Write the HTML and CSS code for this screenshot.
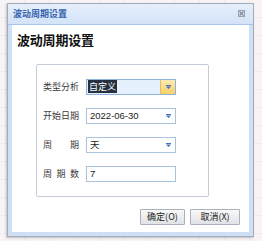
FILE: index.html
```html
<!DOCTYPE html>
<html>
<head>
<meta charset="utf-8">
<link rel="stylesheet" href="styles.css">
</head>
<body>
<div class="desk">
  <div class="dialog">
    <div class="titlebar">
      <span class="title">波动周期设置</span>
      <svg class="close" width="7" height="7" viewBox="0 0 7 7"><rect x="0.5" y="0.5" width="6" height="6" fill="none" stroke="#98a3b0" stroke-width="1"/><path d="M1.5 1.5 L5.5 5.5 M5.5 1.5 L1.5 5.5" stroke="#7d8896" stroke-width="1.2"/></svg>
    </div>
    <div class="frame">
      <div class="panel">
        <div class="heading">波动周期设置</div>
        <div class="fieldset">
          <div class="row">
            <div class="label"><span>类</span><span>型</span><span>分</span><span>析</span></div>
            <div class="combo active">
              <span class="value"><span class="sel">自定义</span></span>
              <span class="trigger hot"><svg width="5" height="4" viewBox="0 0 5 4"><rect x="0" y="0" width="5" height="1" fill="#3f6fb4"/><path d="M0 1.5 L5 1.5 L2.5 4 Z" fill="#3f6fb4"/></svg></span>
            </div>
          </div>
          <div class="row">
            <div class="label"><span>开</span><span>始</span><span>日</span><span>期</span></div>
            <div class="combo">
              <span class="value">2022-06-30</span>
              <span class="trigger"><svg width="5" height="4" viewBox="0 0 5 4"><rect x="0" y="0" width="5" height="1" fill="#3f6fb4"/><path d="M0 1.5 L5 1.5 L2.5 4 Z" fill="#3f6fb4"/></svg></span>
            </div>
          </div>
          <div class="row">
            <div class="label"><span>周</span><span>期</span></div>
            <div class="combo">
              <span class="value">天</span>
              <span class="trigger"><svg width="5" height="4" viewBox="0 0 5 4"><rect x="0" y="0" width="5" height="1" fill="#3f6fb4"/><path d="M0 1.5 L5 1.5 L2.5 4 Z" fill="#3f6fb4"/></svg></span>
            </div>
          </div>
          <div class="row">
            <div class="label"><span>周</span><span>期</span><span>数</span></div>
            <div class="combo">
              <span class="value">7</span>
            </div>
          </div>
        </div>
        <div class="buttons">
          <button class="btn ok">确定(O)</button>
          <button class="btn cancel">取消(X)</button>
        </div>
      </div>
    </div>
  </div>
</div>
</body>
</html>
```

FILE: styles.css
```css
html, body {
  margin: 0;
  padding: 0;
}
body {
  width: 262px;
  height: 241px;
  overflow: hidden;
  background-color: #f8f4f6;
  background-image:
    repeating-linear-gradient(to right, transparent 0, transparent 24px, #f0eaee 24px, #f0eaee 25px),
    repeating-linear-gradient(to bottom, transparent 0, transparent 17px, #f0eaee 17px, #f0eaee 18px);
  font-family: "Noto Sans CJK SC", "Liberation Sans", sans-serif;
}
.desk {
  padding: 3px 0 0 7px;
}
.dialog {
  width: 245px;
  height: 232px;
  border: 1px solid #a3acb9;
  box-shadow: -1px 1px 2px rgba(90, 90, 100, 0.35);
  background: #cfe0f6;
  display: flex;
  flex-direction: column;
}
.titlebar {
  height: 20px;
  border-bottom: 1px solid #a9c6ea;
  background: linear-gradient(to bottom, #e6eefa, #d3e3f7);
  display: flex;
  align-items: center;
  justify-content: space-between;
  padding: 0 8px 0 5px;
}
.title {
  font-size: 9px;
  font-weight: bold;
  color: #3563ae;
  line-height: 10px;
}
.close {
  display: block;
  margin-top: -1px;
}
.frame {
  flex: 1;
  padding: 0 4px 4px 4px;
  display: flex;
}
.panel {
  flex: 1;
  background: #ffffff;
  display: flex;
  flex-direction: column;
}
.heading {
  font-size: 13px;
  font-weight: bold;
  color: #111;
  line-height: 16px;
  padding: 7px 0 0 5px;
  letter-spacing: -0.2px;
}
.fieldset {
  margin: 16px 0 0 24px;
  width: 165px;
  height: 117px;
  border: 1px solid #c4ccda;
  border-radius: 2px;
  padding: 14px 0 0 6px;
  display: flex;
  flex-direction: column;
  gap: 13px;
}
.row {
  display: flex;
  align-items: center;
  height: 16px;
}
.label {
  width: 36px;
  display: flex;
  justify-content: space-between;
  font-size: 9px;
  color: #3a3a3a;
  line-height: 12px;
  margin-right: 7px;
}
.combo {
  width: 88px;
  height: 14px;
  border: 1px solid #a9c3de;
  background: #fff;
  display: flex;
  align-items: center;
}
.combo.active {
  background: #e4f0fc;
  border-color: #8fb3da;
}
.value {
  flex: 1;
  font-size: 9.5px;
  font-family: "Liberation Sans", "Noto Sans CJK SC", sans-serif;
  color: #222;
  padding-left: 3px;
  line-height: 12px;
}
.sel {
  font-family: "Noto Sans CJK SC", sans-serif;
  font-size: 9px;
  background: #24303f;
  color: #fff;
  padding: 0 1px;
  margin-left: -2px;
}
.trigger {
  width: 14px;
  height: 14px;
  display: flex;
  align-items: center;
  justify-content: center;
}
.trigger.hot {
  background: linear-gradient(to bottom, #fdebb2, #f8cf6a);
  border-left: 1px solid #e7bd63;
}
.trigger svg {
  display: block;
}
.buttons {
  display: flex;
  justify-content: flex-end;
  gap: 5px;
  margin-top: 12px;
  padding-right: 9px;
}
.btn {
  height: 16px;
  padding: 0 5px;
  border: 1px solid #aab1bd;
  border-radius: 1px;
  background: linear-gradient(to bottom, #f8f8f8, #dfe2e6);
  font-family: "Noto Sans CJK SC", "Liberation Sans", sans-serif;
  font-size: 9px;
  color: #222;
  line-height: 12px;
}
.btn.ok {
  width: 45px;
}
.btn.cancel {
  width: 50px;
}
```
